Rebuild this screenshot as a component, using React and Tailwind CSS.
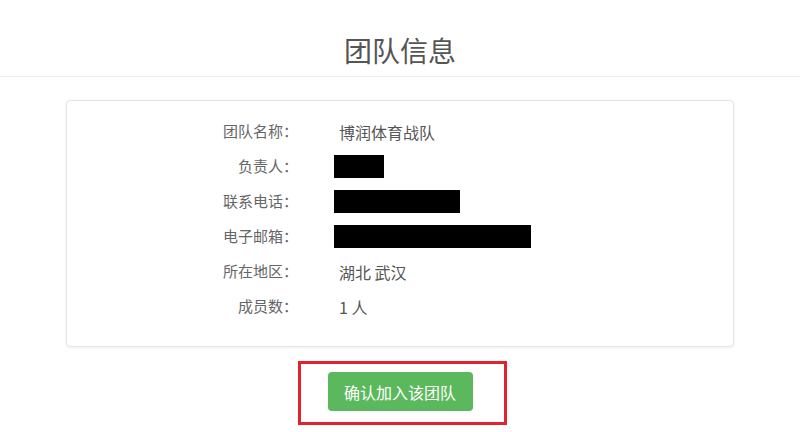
import React from 'react'

const rows = [
  { label: '团队名称：', value: '博润体育战队' },
  { label: '负责人：', hidden: 'w-[50px]' },
  { label: '联系电话：', hidden: 'w-[126px]' },
  { label: '电子邮箱：', hidden: 'w-[197px]' },
  { label: '所在地区：', value: '湖北 武汉' },
  { label: '成员数：', value: '1 人' },
]

function App() {
  return (
    <div className="w-[800px] h-[432px] bg-white overflow-hidden font-['Noto_Sans_CJK_SC',sans-serif]">
      <div className="h-[77px] border-b border-[#ececec] pt-[36px] text-center">
        <h1 className="text-[28px] leading-[28px] text-[#555]">团队信息</h1>
      </div>

      <div className="mx-[66px] mt-[23px] h-[247px] rounded border border-[#e4e4e4] shadow-[0_1px_3px_rgba(0,0,0,0.06)] pt-[13px]">
        {rows.map((row) => (
          <div key={row.label} className="flex items-center h-[35px]">
            <div className="w-[231px] text-right text-[15px] text-[#666]">{row.label}</div>
            {row.value ? (
              <div className="pl-[41px] text-[16px] text-[#555]">{row.value}</div>
            ) : (
              <div className={`ml-[36px] h-[23px] bg-black ${row.hidden}`} />
            )}
          </div>
        ))}
      </div>

      <div className="flex justify-center mt-[14px] pl-[4px]">
        <div className="border-[3px] border-[#e0232c] pt-[8px] pb-[11px] pl-[27px] pr-[31px]">
          <button className="w-[145px] h-[39px] rounded bg-[#5cb85c] text-white text-[16px]">
            确认加入该团队
          </button>
        </div>
      </div>
    </div>
  )
}

export default App
